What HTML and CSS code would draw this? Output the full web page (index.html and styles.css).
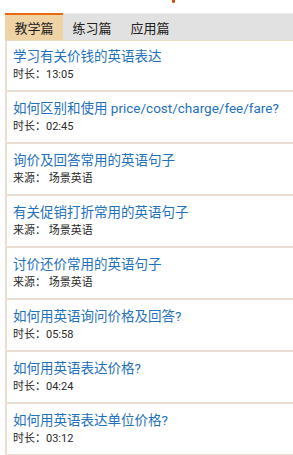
FILE: index.html
```html
<!DOCTYPE html>
<html lang="zh-CN">
<head>
    <meta charset="UTF-8">
    <meta name="viewport" content="width=device-width, initial-scale=1.0">
    <title>价格英语</title>
    <link rel="stylesheet" href="styles.css">
</head>
<body>
    <div class="top"><span class="mark"></span></div>

    <div class="page">
        <div class="tabs">
            <span class="tab active">教学篇</span>
            <span class="tab">练习篇</span>
            <span class="tab">应用篇</span>
        </div>

        <ul class="list">
            <li class="item">
                <a class="title" href="#">学习有关价钱的英语表达</a>
                <p class="meta">时长：13:05</p>
            </li>
            <li class="item">
                <a class="title" href="#">如何区别和使用 price/cost/charge/fee/fare?</a>
                <p class="meta">时长：02:45</p>
            </li>
            <li class="item">
                <a class="title" href="#">询价及回答常用的英语句子</a>
                <p class="meta">来源：&nbsp;场景英语</p>
            </li>
            <li class="item">
                <a class="title" href="#">有关促销打折常用的英语句子</a>
                <p class="meta">来源：&nbsp;场景英语</p>
            </li>
            <li class="item">
                <a class="title" href="#">讨价还价常用的英语句子</a>
                <p class="meta">来源：&nbsp;场景英语</p>
            </li>
            <li class="item">
                <a class="title" href="#">如何用英语询问价格及回答?</a>
                <p class="meta">时长：05:58</p>
            </li>
            <li class="item">
                <a class="title" href="#">如何用英语表达价格?</a>
                <p class="meta">时长：04:24</p>
            </li>
            <li class="item">
                <a class="title" href="#">如何用英语表达单位价格?</a>
                <p class="meta">时长：03:12</p>
            </li>
        </ul>
    </div>
</body>
</html>
```

FILE: styles.css
```css
* {
    box-sizing: border-box;
    margin: 0;
    padding: 0;
}

body {
    background: #fff;
    font-family: Roboto, "Noto Sans CJK SC", sans-serif;
    color: #333;
    overflow: hidden;
}

.top {
    height: 13px;
    display: flex;
    justify-content: center;
    padding-left: 54px;
}

.mark {
    width: 3px;
    height: 3px;
    background: #c8520c;
    border-radius: 0 0 2px 2px;
}

.page {
    margin-left: 5px;
}

.tabs {
    display: flex;
    height: 28px;
    background: #e1e1e1;
    border-top: 1px solid #eeeeee;
    border-bottom: 1px solid #eadbc5;
}

.tab {
    width: 58px;
    display: flex;
    align-items: center;
    justify-content: center;
    font-size: 13px;
    color: #222;
}

.tab.active {
    background: #efd3a4;
    border-top: 2px solid #ea6a10;
    margin-top: -1px;
}

.list {
    list-style: none;
    border-left: 2px solid #e8dfd2;
}

.item {
    height: 52px;
    padding: 7px 0 0 6px;
    border-bottom: 2px solid #e8dfd2;
}

.item:first-child {
    height: 51px;
    padding-top: 6px;
}

.title {
    display: block;
    font-size: 13.5px;
    line-height: 18px;
    color: #1f72bd;
    text-decoration: none;
    white-space: nowrap;
}

.meta {
    margin-top: 3px;
    font-size: 11px;
    line-height: 14px;
    color: #2a2a2a;
}
```
